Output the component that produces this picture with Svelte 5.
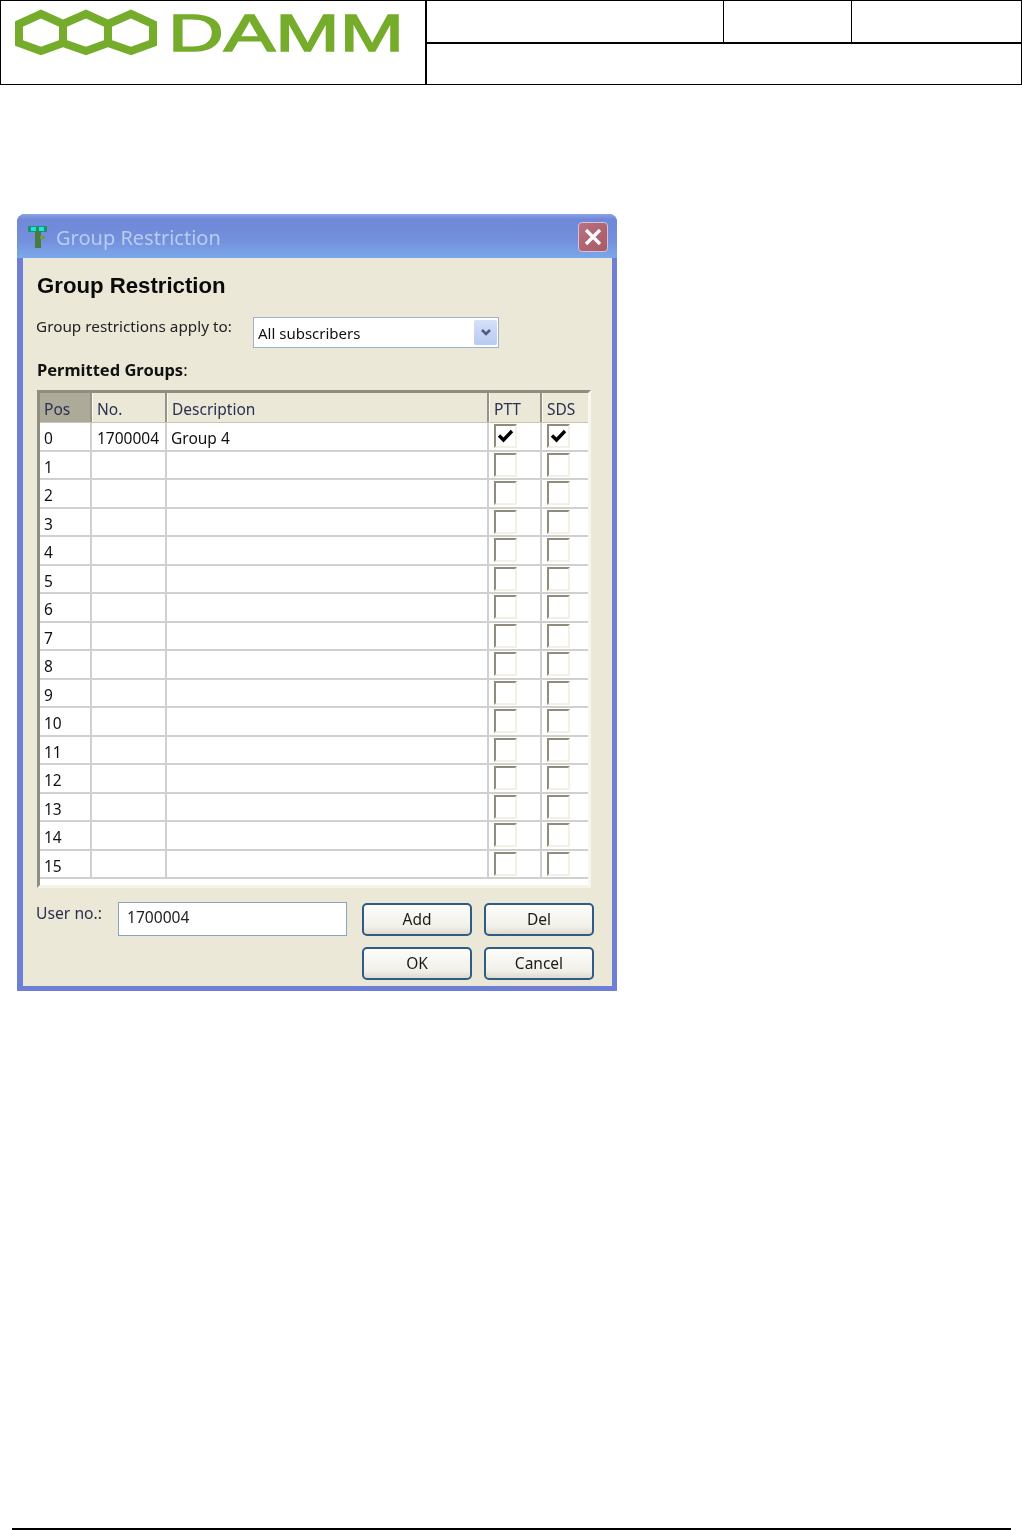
<script>
  const rows = Array.from({ length: 16 }, (_, i) => ({
    pos: i,
    no: i === 0 ? '1700004' : '',
    desc: i === 0 ? 'Group 4' : '',
    ptt: i === 0,
    sds: i === 0
  }));
</script>

<div class="page">
  <header class="head">
    <div class="logo">
      <svg width="405" height="60" viewBox="0 0 405 60" aria-label="DAMM">
        <path
          d="M18 23 40 13 62 23 85 13 107 23 130 13 152 23V42L130 50 107 42 85 50 62 42 40 50 18 42ZM62 23V42M107 23V42"
          fill="none"
          stroke="#76ac2b"
          stroke-width="8"
          stroke-linejoin="miter"
        />
        <text x="167" y="50" class="wordmark" textLength="236" lengthAdjust="spacingAndGlyphs">DAMM</text>
      </svg>
    </div>
    <div class="info">
      <div class="info-top">
        <div class="c1"></div>
        <div class="c2"></div>
        <div class="c3"></div>
      </div>
      <div class="info-bottom"></div>
    </div>
  </header>

  <section class="dialog">
    <div class="titlebar">
      <svg class="appicon" width="22" height="24" viewBox="0 0 22 24">
        <rect x="1" y="1" width="19" height="6" fill="#1f8f6f" />
        <rect x="4" y="2" width="5" height="4" fill="#18e6e0" />
        <rect x="12" y="2" width="5" height="4" fill="#18e6e0" />
        <rect x="8" y="6" width="6" height="17" fill="#4b7a3c" />
        <rect x="13" y="11" width="5" height="3" fill="#6f9a4a" />
      </svg>
      <span class="title">Group Restriction</span>
      <button class="close" aria-label="Close">
        <svg width="20" height="20" viewBox="0 0 20 20">
          <path d="M3 3 17 17M17 3 3 17" stroke="#fff" stroke-width="3.2" />
        </svg>
      </button>
    </div>

    <div class="body">
      <h1>Group Restriction</h1>

      <div class="apply">
        <span class="apply-label">Group restrictions apply to:</span>
        <div class="combo">
          <span>All subscribers</span>
          <div class="arrow">
            <svg width="12" height="9" viewBox="0 0 12 9">
              <path d="M2 2 6 6 10 2" fill="none" stroke="#4a5f85" stroke-width="2.6" />
            </svg>
          </div>
        </div>
      </div>

      <h2>Permitted Groups<span class="colon">:</span></h2>

      <div class="table">
        <div class="tr th">
          <div class="cell sorted">Pos</div>
          <div class="cell">No.</div>
          <div class="cell">Description</div>
          <div class="cell">PTT</div>
          <div class="cell">SDS</div>
        </div>
        {#each rows as row}
          <div class="tr">
            <div class="cell">{row.pos}</div>
            <div class="cell no">{row.no}</div>
            <div class="cell">{row.desc}</div>
            <div class="cell check-cell">
              <span class="check">
                {#if row.ptt}
                  <svg width="17" height="15" viewBox="0 0 17 15"><path d="M2 6.5 6.5 11 15 2" fill="none" stroke="#000" stroke-width="3.4" /></svg>
                {/if}
              </span>
            </div>
            <div class="cell check-cell">
              <span class="check">
                {#if row.sds}
                  <svg width="17" height="15" viewBox="0 0 17 15"><path d="M2 6.5 6.5 11 15 2" fill="none" stroke="#000" stroke-width="3.4" /></svg>
                {/if}
              </span>
            </div>
          </div>
        {/each}
      </div>

      <div class="bottom">
        <span class="user-label">User no.:</span>
        <div class="input">1700004</div>
        <button class="btn">Add</button>
        <button class="btn">Del</button>
        <button class="btn ok">OK</button>
        <button class="btn">Cancel</button>
      </div>
    </div>
  </section>

  <footer class="foot"></footer>
</div>

<style>
  :global(body) {
    margin: 0;
    background: #fff;
  }

  .page {
    height: 1530px;
    display: flex;
    flex-direction: column;
    overflow: hidden;
    font-family: "Noto Sans", "Open Sans", sans-serif;
    color: #111;
  }

  /* document header */
  .head {
    display: flex;
    height: 85px;
    box-sizing: border-box;
    border: 1px solid #000;
    flex: none;
  }
  .logo {
    width: 426px;
    flex: none;
    border-right: 2px solid #000;
    box-sizing: border-box;
  }
  .logo svg {
    display: block;
    filter: blur(0.5px);
  }
  .wordmark {
    font-family: "Liberation Sans", sans-serif;
    font-weight: 400;
    font-size: 52px;
    fill: #76ac2b;
    stroke: #76ac2b;
    stroke-width: 1.4px;
  }
  .info {
    flex: 1;
    display: flex;
    flex-direction: column;
  }
  .info-top {
    height: 41px;
    display: flex;
    border-bottom: 2px solid #000;
  }
  .c1 {
    width: 296px;
    border-right: 1px solid #000;
  }
  .c2 {
    width: 127px;
    border-right: 1px solid #000;
  }
  .c3 {
    flex: 1;
  }

  /* dialog window */
  .dialog {
    flex: none;
    margin: 129px 0 0 17px;
    width: 600px;
    height: 777px;
    box-sizing: border-box;
    display: flex;
    flex-direction: column;
    background: #6f7fd6;
    border-radius: 8px 8px 0 0;
    padding: 0 5px 5px 6px;
    filter: blur(0.3px);
  }
  .titlebar {
    height: 44px;
    flex: none;
    margin: 0 -5px 0 -6px;
    padding: 2px 9px 0 10px;
    box-sizing: border-box;
    display: flex;
    align-items: center;
    border-radius: 8px 8px 0 0;
    background: linear-gradient(#8ba3e6 0, #7088d8 12%, #7390dc 60%, #7ca8ea 100%);
  }
  .appicon {
    flex: none;
  }
  .title {
    margin: 1px 0 0 7px;
    font-size: 20px;
    color: #b9cdf2;
    flex: 1;
  }
  .close {
    width: 30px;
    height: 30px;
    padding: 0;
    display: flex;
    align-items: center;
    justify-content: center;
    background: linear-gradient(135deg, #b97080, #a85a66);
    border: 1px solid #d3c3d8;
    border-radius: 4px;
  }

  .body {
    flex: 1;
    background: #ebe8d8;
    padding: 0 0 0 13px;
    min-height: 0;
  }

  h1 {
    margin: 13px 0 0 1px;
    font-size: 22.2px;
    line-height: 29px;
    font-weight: 700;
    font-family: "Liberation Sans", sans-serif;
    color: #0a0a0a;
  }

  .apply {
    display: flex;
    margin-top: 17px;
  }
  .apply-label {
    width: 217px;
    flex: none;
    font-size: 15.3px;
    line-height: 20px;
    margin-top: -1px;
    color: #222;
  }
  .combo {
    width: 246px;
    height: 31px;
    box-sizing: border-box;
    border: 1px solid #9db3c9;
    background: #fff;
    display: flex;
    align-items: center;
    justify-content: space-between;
    padding: 2px 1px 2px 4px;
    font-size: 15px;
    color: #111;
  }
  .arrow {
    width: 23px;
    height: 25px;
    border-radius: 2px;
    background: linear-gradient(#d5e0f8, #b9cbf2);
    display: flex;
    align-items: center;
    justify-content: center;
  }

  h2 {
    margin: 11px 0 0 1px;
    font-size: 16.5px;
    line-height: 22px;
    font-weight: 700;
    color: #111;
  }
  .colon {
    font-weight: 400;
  }

  .table {
    margin: 9px 0 0 1px;
    width: 554px;
    height: 498px;
    box-sizing: border-box;
    border-top: 3px solid #8f8d7f;
    border-left: 3px solid #8f8d7f;
    border-right: 3px solid #f8f7ef;
    border-bottom: 3px solid #f5f4e9;
    background: #fff;
  }
  .tr {
    display: grid;
    grid-template-columns: 52px 75px 322px 53px 46px;
    height: 28.5px;
    box-sizing: border-box;
    border-bottom: 2px solid #d0d0d0;
    font-size: 15.5px;
  }
  .th {
    height: 30px;
    background: #ebe8d8;
    border-bottom: 1px solid #c9c6b6;
    color: #2a3050;
  }
  .cell {
    padding-left: 4px;
    line-height: 31px;
    border-right: 2px solid #d0d0d0;
    white-space: nowrap;
    overflow: hidden;
  }
  .no {
    padding-left: 5px;
  }
  .tr .cell:last-child {
    border-right: none;
  }
  .th .cell {
    padding-left: 4px;
    line-height: 33px;
    border-right: 2px solid #96948a;
    border-left: 1px solid #fbfaf4;
  }
  .th .sorted {
    background: #aeaa9a;
    border-left: none;
  }
  .check-cell {
    padding-left: 5px;
    display: flex;
    align-items: flex-start;
    padding-top: 1px;
  }
  .check {
    width: 23px;
    height: 24px;
    box-sizing: border-box;
    border-top: 2px solid #8f8c7c;
    border-left: 2px solid #8f8c7c;
    border-right: 2px solid #f3f1e6;
    border-bottom: 2px solid #f3f1e6;
    display: flex;
    align-items: center;
    justify-content: center;
  }

  .bottom {
    display: grid;
    grid-template-columns: 82px 229px 110px 110px;
    grid-template-rows: 33px 33px;
    row-gap: 11px;
    margin-top: 15px;
    align-items: start;
  }
  .user-label {
    font-size: 15.7px;
    line-height: 20px;
    color: #2a3050;
  }
  .input {
    height: 34px;
    box-sizing: border-box;
    margin-top: -1px;
    border: 1px solid #8ba4c4;
    background: #fff;
    font-size: 15.6px;
    line-height: 28px;
    padding-left: 8px;
    color: #222;
  }
  .btn {
    font-family: inherit;
    font-size: 15.5px;
    color: #1a1a1a;
    width: 110px;
    height: 33px;
    padding: 0 0 2px;
    box-sizing: border-box;
    border: 2px solid #2f5c86;
    border-radius: 5px;
    background: linear-gradient(#fdfdfb, #f1f0e8 75%, #dedbcc);
    margin-left: 15px;
  }
  .btn:nth-of-type(even) {
    margin-left: 27px;
  }
  .ok {
    grid-column: 3;
  }

  .foot {
    margin: auto 11px 0 12px;
    height: 2px;
    background: #000;
    flex: none;
  }
</style>
